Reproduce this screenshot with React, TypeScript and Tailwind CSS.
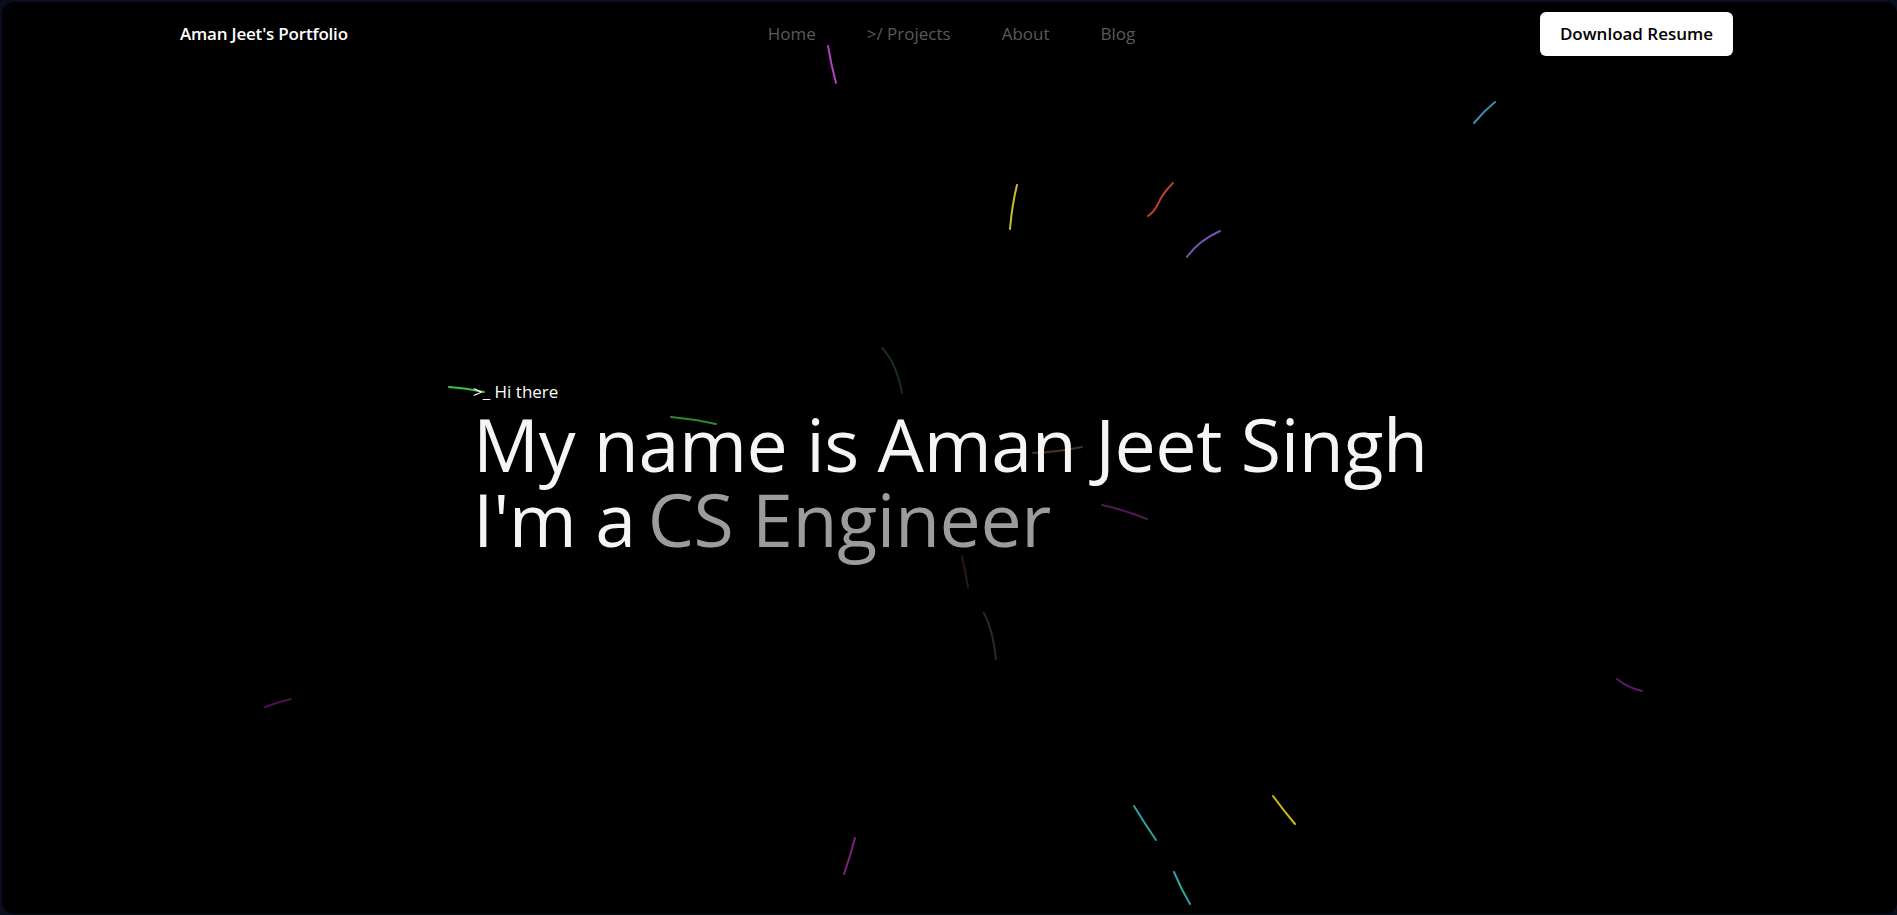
import React from 'react';

const streaks = [
  { d: 'M828 46 Q831 64 836 83', c: '#b040c0' },
  { d: 'M1474 123 Q1484 111 1495 102', c: '#3a8cb0' },
  { d: 'M1017 185 Q1012 205 1010 229', c: '#c8bc30' },
  { d: 'M1173 183 Q1162 194 1158 204 Q1154 212 1148 216', c: '#b8402e' },
  { d: 'M1220 231 Q1198 241 1187 257', c: '#7a4fb4' },
  { d: 'M882 348 Q896 362 902 393', c: '#16301c' },
  { d: 'M449 387 Q466 388 484 392', c: '#40c040' },
  { d: 'M671 417 Q694 419 716 424', c: '#2e8a2e' },
  { d: 'M1033 453 Q1058 452 1082 447', c: '#4a3220' },
  { d: 'M1102 505 Q1125 510 1147 519', c: '#4e1a50' },
  { d: 'M962 556 Q965 570 968 587', c: '#2a1a10' },
  { d: 'M984 613 Q993 630 996 659', c: '#2a2a2a' },
  { d: 'M265 707 Q278 702 291 699', c: '#4a1050' },
  { d: 'M1617 679 Q1628 688 1642 691', c: '#5e1a6e' },
  { d: 'M1134 806 Q1145 824 1156 840', c: '#30a0a0' },
  { d: 'M1273 796 Q1284 811 1295 824', c: '#d4c000' },
  { d: 'M855 838 Q850 857 844 874', c: '#802080' },
  { d: 'M1174 872 Q1181 889 1190 904', c: '#30a0a0' },
];

const navLinks = ['Home', '>/ Projects', 'About', 'Blog'];

const App = () => {
  return (
    <div className="min-h-screen bg-[#0a0e1c] pt-[2px] pl-[2px] pb-[1px]">
      <div
        className="relative min-h-[912px] overflow-hidden rounded-xl bg-black text-white"
        style={{ fontFamily: '"Open Sans", "Noto Sans", sans-serif' }}
      >
        {/* falling streaks */}
        <svg
          className="pointer-events-none absolute left-[-2px] top-[-2px]"
          width="1897"
          height="915"
          viewBox="0 0 1897 915"
          fill="none"
        >
          {streaks.map((s, i) => (
            <path key={i} d={s.d} stroke={s.c} strokeWidth="2" strokeLinecap="round" />
          ))}
        </svg>

        {/* Header */}
        <header className="relative grid h-[64px] grid-cols-3 items-center pl-[178px] pr-[164px]">
          <div className="text-[17px] font-semibold tracking-[-0.2px] text-white">Aman Jeet's Portfolio</div>
          <nav className="mr-[10px] flex items-center justify-center gap-[51px] text-[17px] text-[#5a5a5a]">
            {navLinks.map((l) => (
              <a key={l} href="#" className="hover:text-white">
                {l}
              </a>
            ))}
          </nav>
          <div className="flex justify-end">
            <button className="h-[44px] w-[193px] rounded-md bg-white text-[17px] font-semibold text-black">
              Download Resume
            </button>
          </div>
        </header>

        {/* Hero */}
        <section className="relative pl-[471px] pt-[314px]">
          <p className="text-[17px] leading-[23px] text-white">&gt;_ Hi there</p>
          <h1 className="mt-[3px] text-[73.5px] font-normal leading-[75px] tracking-[-0.4px] text-[#f5f5f5]">
            My name is Aman Jeet Singh
            <br />
            I'm a<span className="ml-[12px] text-[#9c9c9c]">CS Engineer</span>
          </h1>
        </section>
      </div>
    </div>
  );
};

export default App;
